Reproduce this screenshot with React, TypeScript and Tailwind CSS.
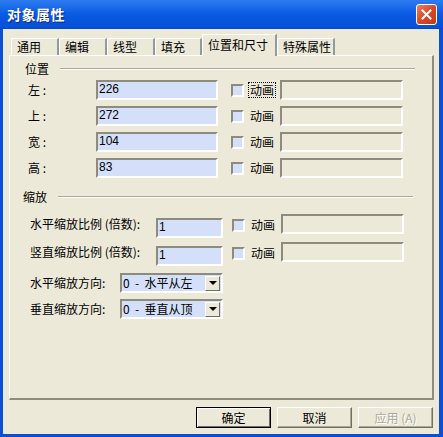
import React from 'react';

const tabs = [
  { label: '通用', w: 'w-[48px]' },
  { label: '编辑', w: 'w-[48px]' },
  { label: '线型', w: 'w-[48px]' },
  { label: '填充', w: 'w-[47px]' },
  { label: '位置和尺寸', w: 'w-[75px]', active: true },
  { label: '特殊属性', w: 'w-[58px]' },
];

const sunken =
  'border-2 border-t-[#8d8a7e] border-l-[#8d8a7e] border-b-white border-r-white';

const Check: React.FC<{ focus?: boolean }> = ({ focus }) => (
  <div className="flex items-center">
    <div className={`w-[13px] h-[13px] bg-[#d4e0fa] ${sunken}`} />
    <span
      className={`ml-[5px] text-[12px] leading-[14px] px-px ${focus ? 'outline outline-1 outline-dotted outline-black' : ''}`}
    >
      动画
    </span>
  </div>
);

const Disabled: React.FC = () => <div className={`w-[123px] h-[20px] bg-[#ece9d8] ${sunken}`} />;

const TextBox: React.FC<{ value: string; w: string }> = ({ value, w }) => (
  <div
    className={`${w} h-[20px] bg-[#d4e0fa] ${sunken} pl-px text-[12px] leading-[15px] font-['Liberation_Sans','Noto_Sans_CJK_SC',sans-serif]`}
  >
    {value}
  </div>
);

const Select: React.FC<{ value: string }> = ({ value }) => (
  <div className={`w-[103px] h-[20px] bg-[#d4e0fa] ${sunken} flex items-center justify-between pr-px`}>
    <span className="pl-[1px] text-[12px] leading-[14px] whitespace-pre">{value}</span>
    <div className="w-[15px] h-[15px] bg-[#ece9d8] border border-t-white border-l-white border-b-[#716f64] border-r-[#716f64] flex items-center justify-center">
      <div className="w-0 h-0 border-l-[4px] border-r-[4px] border-t-[4px] border-l-transparent border-r-transparent border-t-black" />
    </div>
  </div>
);

const Header: React.FC<{ label: string; lineMl: string; mr: string }> = ({ label, lineMl, mr }) => (
  <div className={`flex items-center ${mr}`}>
    <span className="text-[12px] leading-[14px]">{label}</span>
    <div className={`flex-1 ${lineMl} h-[2px] border-t border-t-[#aca899] border-b border-b-white`} />
  </div>
);

const App: React.FC = () => {
  const pos = [
    ['左 :', '226'],
    ['上 :', '272'],
    ['宽 :', '104'],
    ['高 :', '83'],
  ];

  return (
    <div className="w-[443px] h-[437px] flex flex-col bg-[#ece9d8] text-black font-['Noto_Sans_CJK_SC','Noto_Sans',sans-serif] select-none overflow-hidden">
      {/* Title bar */}
      <div className="h-[29px] flex items-center justify-between pl-[7px] pr-[6px] bg-gradient-to-b from-[#2d7cf0] via-[#0a5ae3] to-[#0650d6] border-b border-b-[#0a47c8]">
        <span className="text-white font-bold text-[14px] leading-[16px] tracking-[0.5px] [text-shadow:1px_1px_0_#0a2a8a]">对象属性</span>
        <div className="w-[21px] h-[21px] rounded-[3px] border border-white bg-gradient-to-br from-[#e6805e] via-[#d6492a] to-[#c23a1c] flex items-center justify-center">
          <svg width="11" height="11" viewBox="0 0 11 11">
            <path d="M1.5 1.5 L9.5 9.5 M9.5 1.5 L1.5 9.5" stroke="white" strokeWidth="2" strokeLinecap="square" />
          </svg>
        </div>
      </div>

      {/* Body */}
      <div className="flex-1 flex flex-col border-l-[3px] border-r-[4px] border-b-[3px] border-[#0a4fd6] pt-[5px] pl-[6px] pr-[5px]">
        {/* Tabs */}
        <div className="h-[21px] flex items-end pl-[2px]">
          {tabs.map((t) =>
            t.active ? (
              <div
                key={t.label}
                className={`${t.w} h-[22px] -mb-px relative z-10 bg-[#ece9d8] border-t border-l border-white border-r-2 border-r-[#919b9c] rounded-tl-[2px] pl-[5px] pt-[1px] text-[12px] leading-[17px]`}
              >
                {t.label}
              </div>
            ) : (
              <div
                key={t.label}
                className={`${t.w} h-[17px] border-t border-l border-white border-r-2 border-r-[#919b9c] rounded-tl-[2px] pl-[5px] text-[12px] leading-[16px]`}
              >
                {t.label}
              </div>
            )
          )}
        </div>

        {/* Panel */}
        <div className="h-[345px] border-t border-l border-white border-r-2 border-b-2 border-r-[#8e8b7f] border-b-[#8e8b7f] pt-[6px]">
          <div className="pl-[15px]">
            <Header label="位置" lineMl="ml-[11px]" mr="mr-[17px]" />
          </div>

          <div className="mt-[4px] flex flex-col gap-[6px]">
            {pos.map(([l, v], i) => (
              <div key={l} className="flex items-center h-[20px]">
                <span className="w-[86px] pl-[18px] text-[12px] leading-[14px] whitespace-pre">{l}</span>
                <TextBox value={v} w="w-[122px]" />
                <div className="ml-[13px]">
                  <Check focus={i === 0} />
                </div>
                <div className="ml-[5px]">
                  <Disabled />
                </div>
              </div>
            ))}
          </div>

          <div className="mt-[12px] pl-[13px]">
            <Header label="缩放" lineMl="ml-[11px]" mr="mr-[19px]" />
          </div>

          <div className="mt-[10px] flex flex-col gap-[4px]">
            {['水平缩放比例 (倍数):', '竖直缩放比例 (倍数):'].map((l) => (
              <div key={l} className="flex items-start h-[24px]">
                <span className="w-[146px] pl-[20px] mt-[3px] text-[12px] leading-[14px] whitespace-pre">{l}</span>
                <div className="mt-[4px]">
                  <TextBox value="1" w="w-[67px]" />
                </div>
                <div className="ml-[9px] mt-[4px]">
                  <Check />
                </div>
                <div className="ml-[5px]">
                  <Disabled />
                </div>
              </div>
            ))}
          </div>

          <div className="mt-[7px] flex flex-col gap-[6px]">
            {[
              ['水平缩放方向:', '0  -  水平从左'],
              ['垂直缩放方向:', '0  -  垂直从顶'],
            ].map(([l, v]) => (
              <div key={l} className="flex items-center h-[20px]">
                <span className="w-[110px] pl-[20px] text-[12px] leading-[14px]">{l}</span>
                <Select value={v} />
              </div>
            ))}
          </div>
        </div>

        {/* Buttons */}
        <div className="mt-[7px] flex justify-end gap-[6px] pr-px">
          <button className="w-[75px] h-[21px] bg-[#ece9d8] border border-black shadow-[inset_1px_1px_0_#fff,inset_-1px_-1px_0_#716f64] text-[12px] leading-[14px]">
            确定
          </button>
          <button className="w-[75px] h-[21px] bg-[#ece9d8] border border-t-white border-l-white border-b-[#716f64] border-r-[#716f64] shadow-[inset_-1px_-1px_0_#aca899] text-[12px] leading-[14px]">
            取消
          </button>
          <button className="w-[75px] h-[21px] bg-[#ece9d8] border border-t-white border-l-white border-b-[#716f64] border-r-[#716f64] shadow-[inset_-1px_-1px_0_#aca899] text-[12px] leading-[14px] text-[#aca899] [text-shadow:1px_1px_0_#fff]">
            应用 (A)
          </button>
        </div>
      </div>
    </div>
  );
};

export default App;
